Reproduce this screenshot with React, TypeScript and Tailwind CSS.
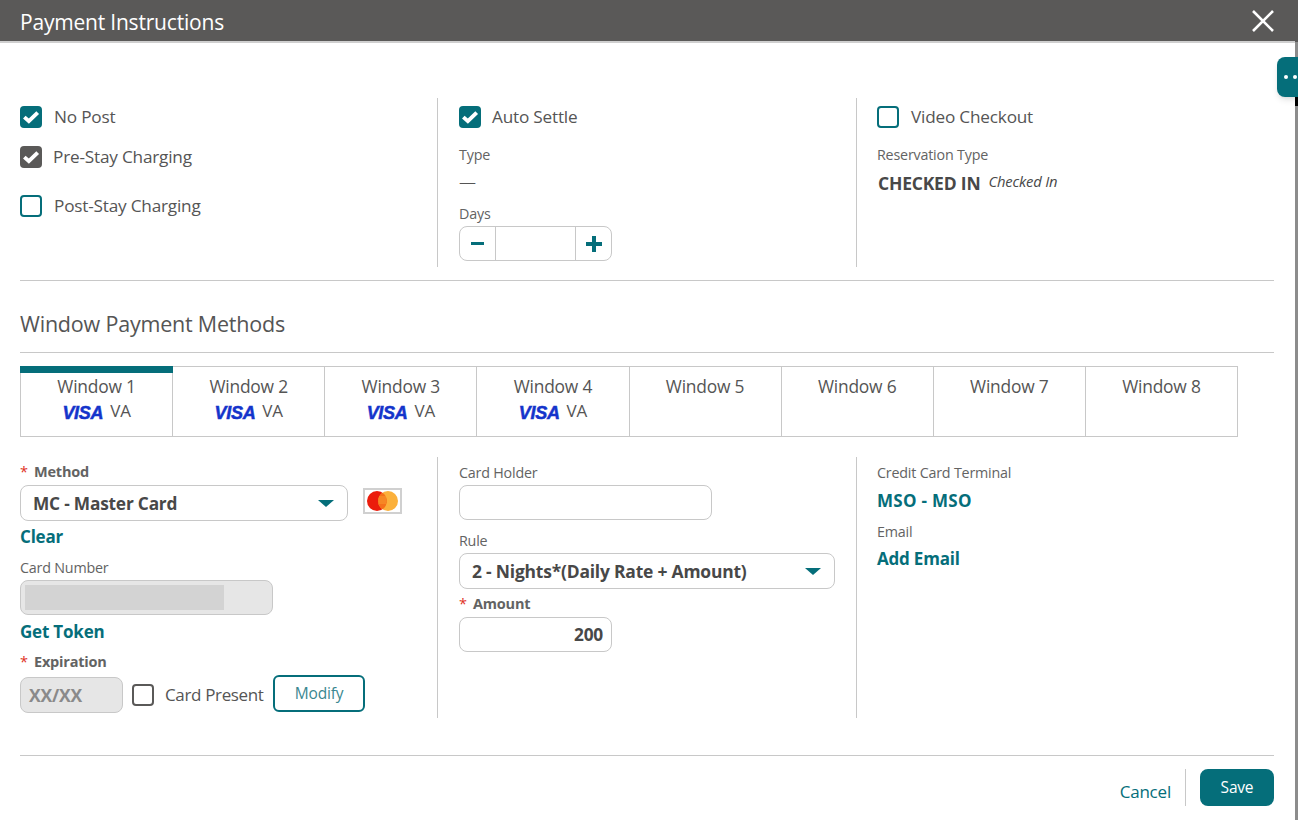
import React from "react";

const Box = ({ kind, cls = "" }: { kind: "teal" | "gray" | "empty" | "emptyGray"; cls?: string }) => {
  const base = "w-[22px] h-[22px] rounded-[4px] flex items-center justify-center shrink-0 ";
  const style =
    kind === "teal"
      ? "bg-[#056e7a]"
      : kind === "gray"
      ? "bg-[#5a5958]"
      : kind === "empty"
      ? "border-2 border-[#056e7a] bg-white"
      : "border-2 border-[#5a5958] bg-white";
  return (
    <span className={base + style + " " + cls}>
      {(kind === "teal" || kind === "gray") && (
        <svg width="18" height="14" viewBox="0 0 16 13" fill="none">
          <path d="M1.8 6.6 L6 10.4 L14.2 2.4" stroke="#fff" strokeWidth="3.6" />
        </svg>
      )}
    </span>
  );
};

const Visa = () => (
  <span className="font-['Liberation_Sans',sans-serif] italic font-bold text-[#1434cb] text-[18px] leading-none tracking-[-0.3px] [-webkit-text-stroke:0.5px_#1434cb]">
    VISA
  </span>
);

const Caret = () => (
  <svg width="16" height="7" viewBox="0 0 16 7">
    <path d="M0 0 H16 L8 7 Z" fill="#056e7a" />
  </svg>
);

const Tab = ({ n, visa, active }: { n: number; visa?: boolean; active?: boolean }) => (
  <div
    className={
      "flex-1 h-[71px] border-[#c8c8c8] border-t border-b border-r flex flex-col items-center relative " +
      (n === 1 ? "border-l" : "")
    }
  >
    {active && <div className="absolute -top-px -left-px -right-px h-[7px] bg-[#056e7a]" />}
    <div className="mt-[8px] text-[17.4px] leading-[22px] text-[#555]">Window {n}</div>
    {visa && (
      <div className="flex items-center gap-[7px] h-[24px] mt-[2px]">
        <span className="mt-[3px] flex"><Visa /></span>
        <span className="text-[17px] text-[#555] leading-[20px]">VA</span>
      </div>
    )}
  </div>
);

const Required = ({ children, cls = "" }: { children: React.ReactNode; cls?: string }) => (
  <div className={"flex items-center h-[20px] text-[14.5px] font-bold text-[#636363] " + cls}>
    <span className="text-[#e0301e] w-[14px] font-normal">*</span>
    {children}
  </div>
);

const Label = ({ children, cls = "" }: { children: React.ReactNode; cls?: string }) => (
  <div className={"text-[14.3px] leading-[20px] text-[#636363] " + cls}>{children}</div>
);

const LinkB = ({ children, cls = "" }: { children: React.ReactNode; cls?: string }) => (
  <div className={"text-[17px] font-bold leading-[24px] text-[#056e7a] " + cls}>{children}</div>
);

export default function App() {
  return (
    <div className="w-[1298px] h-[820px] overflow-hidden bg-[#8c8c8c] flex relative font-['Open_Sans',sans-serif] tracking-[-0.2px]">
      <div className="w-[1295px] h-[820px] bg-white shrink-0 flex flex-col">
        <header className="h-[43px] bg-[#5a5958] border-b-2 border-[#cfcfcf] flex items-center justify-between pl-[20px] pr-[21px] shrink-0">
          <span className="text-[21px] text-white mt-[5px]">Payment Instructions</span>
          <svg width="22" height="22" viewBox="0 0 22 22">
            <path d="M1 1 L21 21 M21 1 L1 21" stroke="#fff" strokeWidth="2.6" />
          </svg>
        </header>

        <div className="pl-[20px] pr-[21px] flex-1 flex flex-col">
          <section className="mt-[55px] grid grid-cols-[418px_419px_1fr] h-[169px]">
            <div className="border-r border-[#c8c8c8] relative">
              <label className="flex items-center gap-[12px] mt-[7px] h-[24px] text-[17.2px] text-[#555]">
                <Box kind="teal" />No Post
              </label>
              <label className="flex items-center gap-[11px] mt-[16px] h-[24px] text-[17.2px] text-[#555]">
                <Box kind="gray" />Pre-Stay Charging
              </label>
              <label className="flex items-center gap-[12px] mt-[25px] h-[24px] text-[17.2px] text-[#555]">
                <Box kind="empty" />Post-Stay Charging
              </label>
            </div>
            <div className="border-r border-[#c8c8c8] pl-[21px]">
              <label className="flex items-center gap-[11px] mt-[7px] h-[24px] text-[17.2px] text-[#555]">
                <Box kind="teal" />Auto Settle
              </label>
              <Label cls="mt-[16px]">Type</Label>
              <div className="mt-[7px] h-[20px] text-[17px] leading-[20px] text-[#555] font-light">—</div>
              <Label cls="mt-[12px]">Days</Label>
              <div className="mt-[2px] w-[153px] h-[35px] border border-[#c8c8c8] rounded-[8px] flex items-stretch">
                <div className="w-[36px] border-r border-[#c8c8c8] flex items-center justify-center">
                  <span className="w-[13px] h-[3.5px] bg-[#056e7a]" />
                </div>
                <div className="flex-1" />
                <div className="w-[36px] border-l border-[#c8c8c8] flex items-center justify-center">
                  <svg width="16" height="16" viewBox="0 0 16 16"><path d="M6 0h4v6h6v4h-6v6H6v-6H0V6h6z" fill="#056e7a" /></svg>
                </div>
              </div>
            </div>
            <div className="pl-[20px]">
              <label className="flex items-center gap-[12px] mt-[7px] h-[24px] text-[17.2px] text-[#555]">
                <Box kind="empty" />Video Checkout
              </label>
              <Label cls="mt-[16px]">Reservation Type</Label>
              <div className="mt-[6px] flex items-baseline gap-[8px] pl-px">
                <span className="text-[17.5px] font-bold text-[#484848] leading-[24px]">CHECKED IN</span>
                <span className="text-[14.8px] italic text-[#484848] leading-[20px] -translate-y-[3px]">Checked In</span>
              </div>
            </div>
          </section>

          <hr className="mt-[13px] border-[#c8c8c8]" />
          <h2 className="mt-[28px] h-[30px] text-[21.5px] leading-[30px] text-[#555] font-normal">Window Payment Methods</h2>
          <hr className="mt-[13px] border-[#c8c8c8]" />

          <div className="mt-[13px] w-[1218px] flex">
            {[1, 2, 3, 4, 5, 6, 7, 8].map((n) => (
              <Tab key={n} n={n} visa={n < 5} active={n === 1} />
            ))}
          </div>

          <section className="mt-[20px] grid grid-cols-[418px_419px_1fr] h-[261px]">
            <div className="border-r border-[#c8c8c8]">
              <Required cls="mt-[5px]">Method</Required>
              <div className="mt-[3px] flex items-start gap-[15px]">
                <div className="w-[328px] h-[36px] border border-[#c8c8c8] rounded-[8px] flex items-center justify-between pl-[12px] pr-[13px]">
                  <span className="text-[17.3px] font-bold text-[#484848] mt-[2px]">MC - Master Card</span>
                  <Caret />
                </div>
                <div className="mt-[3px] w-[39px] h-[26px] border-2 border-[#d0d0d0] flex items-center justify-center">
                  <svg width="33" height="20" viewBox="0 0 33 20">
                    <circle cx="11" cy="10" r="10" fill="#eb1c0c" />
                    <circle cx="22" cy="10" r="10" fill="#fbb03b" />
                    <path d="M16.5 1.7a10 10 0 0 1 0 16.6a10 10 0 0 1 0-16.6z" fill="#f5711a" />
                    <path d="M13 6h7M12.5 8h8M12.5 10h8M13 12h7" stroke="#fbb03b" strokeWidth="0.7" />
                  </svg>
                </div>
              </div>
              <LinkB cls="mt-[4px]">Clear</LinkB>
              <Label cls="mt-[9px]">Card Number</Label>
              <div className="mt-[2px] w-[253px] h-[35px] bg-[#e6e6e6] border border-[#c8c8c8] rounded-[8px] py-[4px] pl-[4px]">
                <div className="w-[199px] h-[25px] bg-[#d3d3d3]" />
              </div>
              <LinkB cls="mt-[5px]">Get Token</LinkB>
              <Required cls="mt-[8px]">Expiration</Required>
              <div className="mt-[5px] flex items-center">
                <div className="w-[103px] h-[36px] bg-[#e6e6e6] border border-[#c8c8c8] rounded-[8px] flex items-center pl-[8px] text-[17.5px] font-bold text-[#8a8a8a]">XX/XX</div>
                <Box kind="emptyGray" cls="ml-[9px]" />
                <span className="ml-[11px] w-[100px] whitespace-nowrap text-[17px] tracking-[-0.35px] text-[#555]">Card Present</span>
                <button className="ml-[8px] w-[92px] h-[37px] border-2 border-[#056e7a] rounded-[6px] text-[15.5px] text-[#3a8790] -mt-[3px]">Modify</button>
              </div>
            </div>
            <div className="border-r border-[#c8c8c8] pl-[21px]">
              <Label cls="mt-[6px]">Card Holder</Label>
              <div className="mt-[2px] w-[253px] h-[35px] border border-[#c8c8c8] rounded-[8px]" />
              <Label cls="mt-[11px]">Rule</Label>
              <div className="mt-[2px] w-[376px] h-[36px] border border-[#c8c8c8] rounded-[8px] flex items-center justify-between pl-[12px] pr-[13px]">
                <span className="text-[17.45px] font-bold text-[#484848]">2 - Nights*(Daily Rate + Amount)</span>
                <Caret />
              </div>
              <Required cls="mt-[5px]">Amount</Required>
              <div className="mt-[3px] w-[153px] h-[35px] border border-[#c8c8c8] rounded-[8px] flex items-center justify-end pr-[8px] text-[17.3px] font-bold text-[#484848]">200</div>
            </div>
            <div className="pl-[20px]">
              <Label cls="mt-[6px]">Credit Card Terminal</Label>
              <LinkB cls="mt-[6px] tracking-[0.3px]">MSO - MSO</LinkB>
              <Label cls="mt-[9px]">Email</Label>
              <LinkB cls="mt-[5px]">Add Email</LinkB>
            </div>
          </section>

          <hr className="mt-[37px] border-[#c8c8c8]" />
          <footer className="mt-[13px] flex justify-end items-stretch h-[37px]">
            <span className="self-end mb-[2px] text-[17px] text-[#056e7a]">Cancel</span>
            <span className="ml-[14px] w-px bg-[#c8c8c8]" />
            <button className="ml-[14px] w-[74px] bg-[#056e7a] rounded-[8px] text-white text-[15.5px]">Save</button>
          </footer>
        </div>
      </div>
      <div className="absolute left-[1295px] top-0 w-[3px] h-[42px] bg-[#5a5958]" />
      <div className="absolute left-[1295px] top-[97px] w-[3px] h-[9px] bg-black" />
      <div className="absolute left-[1277px] top-[57px] w-[30px] h-[40px] bg-[#056e7a] rounded-[8px] shadow-md flex items-center pl-[7px] gap-[5px]">
        <span className="w-[4px] h-[4px] rounded-full bg-white" />
        <span className="w-[4px] h-[4px] rounded-full bg-white" />
      </div>
    </div>
  );
}
